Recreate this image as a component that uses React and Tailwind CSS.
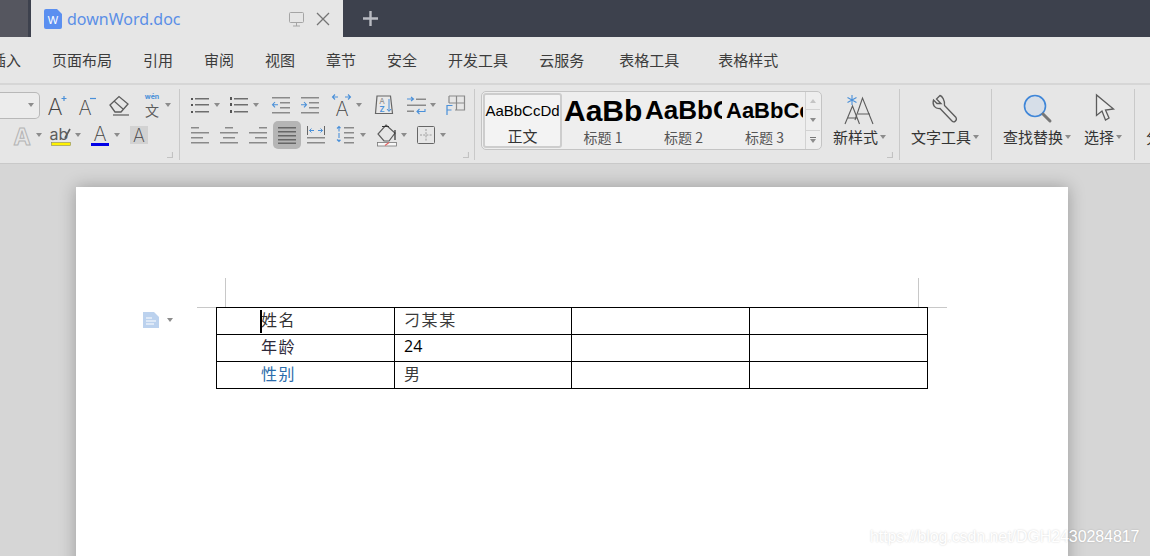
import React from 'react';

const GRAY = '#5c5c5c';
const LINE = '#8a8a8a';
const BLUE = '#4a90d9';
const GLYPH = 'Inter, "Noto Sans", sans-serif';

const Ic = ({ w, h = 24, className = '', children }) => (
  <svg width={w} height={h} viewBox={`0 0 ${w} ${h}`} fill="none" className={`shrink-0 overflow-visible ${className}`}>
    {children}
  </svg>
);

const Caret = ({ className = '' }) => (
  <svg width="6" height="4" viewBox="0 0 6 4" className={`shrink-0 ${className}`}>
    <path d="M0 0H6L3 4z" fill="#8c8c8c" />
  </svg>
);

// horizontal bars used by the paragraph icons: [x, y, width]
const Bars = ({ rows, color = LINE }) => (
  <>
    {rows.map(([x, y, l], i) => (
      <rect key={i} x={x} y={y} width={l} height="1.5" fill={color} />
    ))}
  </>
);

const Letter = ({ x, y, size = 23, weight = 200, fill = '#444', ...rest }) => (
  <text x={x} y={y} fontSize={size} fontWeight={weight} fill={fill} fontFamily={GLYPH} textAnchor="middle" {...rest}>A</text>
);

const Corner = ({ className }) => (
  <svg width="6" height="6" viewBox="0 0 6 6" className={`absolute ${className}`}>
    <path d="M5.5 0V5.5H0" stroke="#c2c2c2" strokeWidth="1.2" fill="none" />
  </svg>
);

const Sep = () => <div className="w-px h-[71px] mt-[4px] bg-[#c9c9c9] shrink-0" />;

const TitleBar = () => (
  <div className="flex h-[37px] bg-[#3d414d] shrink-0">
    <div className="w-[28px] bg-[#55565f]" />
    <div className="ml-[3px] w-[312px] bg-[#e6e6e6] flex items-center pl-[13px]">
      <Ic w={18} h={20}>
        <path d="M2 0H13L18 5V18a2 2 0 0 1-2 2H2a2 2 0 0 1-2-2V2a2 2 0 0 1 2-2z" fill="#5b8ff0" />
        <text x="9" y="15" fontSize="11" fontWeight="400" fill="#fff" fontFamily={GLYPH} textAnchor="middle">W</text>
      </Ic>
      <span className="ml-[5px] text-[16px] leading-none text-[#5b8fe6] font-['Noto_Sans',sans-serif] w-[222px]">downWord.doc</span>
      <Ic w={15} h={16}>
        <rect x="0.5" y="1.5" width="14" height="10" rx="1" stroke="#a5a5a5" />
        <path d="M7.5 11.5V15M4 15H11" stroke="#a5a5a5" />
      </Ic>
      <Ic w={14} h={14} className="ml-[12px]">
        <path d="M1 1L13 13M13 1L1 13" stroke="#757575" strokeWidth="1.3" />
      </Ic>
    </div>
    <Ic w={15} h={15} className="ml-[20px] mt-[11px]">
      <path d="M7.5 0V15M0 7.5H15" stroke="#b9bbc2" strokeWidth="2.4" />
    </Ic>
  </div>
);

const MenuBar = () => (
  <div className="flex items-center h-[46px] bg-[#e6e6e6] border-b-2 border-[#d6d6d6] box-content text-[15px] text-[#3c3c3c] shrink-0 whitespace-nowrap">
    <div className="flex items-center gap-[31px] ml-[-9px]">
      <span>插入</span>
      <span>页面布局</span>
      <span>引用</span>
      <span>审阅</span>
      <span>视图</span>
      <span>章节</span>
      <span>安全</span>
      <span>开发工具</span>
      <span>云服务</span>
      <span className="ml-[4px]">表格工具</span>
      <span className="ml-[8px]">表格样式</span>
    </div>
  </div>
);

const FontGroup = () => (
  <div className="relative w-[179px] shrink-0 pt-[6px]">
    <div className="flex items-center h-[28px]">
      <div className="w-[40px] h-[27px] border border-l-0 border-[#b8b8b8] rounded-r-[5px] bg-[#ececec] flex items-center justify-end pr-[5px]">
        <Caret />
      </div>
      <Ic w={20} className="ml-[7px]">
        <Letter x="8" y="22" />
        <path d="M17 3V8M14.5 5.5H19.5" stroke={BLUE} strokeWidth="1.2" />
      </Ic>
      <Ic w={18} className="ml-[11px]">
        <Letter x="7" y="22" size={20} />
        <path d="M12 5.5H18" stroke={BLUE} strokeWidth="1.2" />
      </Ic>
      <Ic w={20} className="ml-[13px]">
        <path d="M1 12L10 3.5L19 11L12 19H6z" stroke={GRAY} strokeWidth="1.3" />
        <path d="M5 8L14 16" stroke={GRAY} strokeWidth="1.2" />
        <path d="M4 22H20" stroke={GRAY} strokeWidth="1.2" />
      </Ic>
      <Ic w={18} className="ml-[14px]">
        <text x="9" y="6" fontSize="7" fontWeight="700" fill={BLUE} fontFamily={GLYPH} textAnchor="middle">wén</text>
        <text x="9" y="23" fontSize="14" fill={GRAY} fontFamily='"Noto Sans CJK SC", sans-serif' textAnchor="middle">文</text>
      </Ic>
      <Caret className="ml-[4px]" />
    </div>
    <div className="flex items-center h-[30px] mt-[1px]">
      <Ic w={18} className="ml-[13px]">
        <Letter x="9" y="22" size={23} weight={700} fill="none" stroke="#b4b4b4" strokeWidth="1" />
      </Ic>
      <Caret className="ml-[5px]" />
      <Ic w={20} className="ml-[9px]">
        <text x="8" y="17" fontSize="16" fill={GRAY} fontFamily={GLYPH} textAnchor="middle">ab</text>
        <path d="M14 15L19 6" stroke={GRAY} strokeWidth="1.6" />
        <rect x="0.5" y="19.5" width="19" height="3" fill="#fff200" stroke="#8d8d5a" strokeWidth="0.6" />
      </Ic>
      <Caret className="ml-[4px]" />
      <Ic w={18} className="ml-[10px]">
        <Letter x="9" y="18" size={20} />
        <rect x="0" y="20" width="18" height="3" fill="#0000e6" />
      </Ic>
      <Caret className="ml-[5px]" />
      <div className="ml-[10px] w-[18px] h-[18px] bg-[#d2d2d2] flex items-center justify-center">
        <Ic w={18} h={18}>
          <Letter x="9" y="16" size={18} />
        </Ic>
      </div>
    </div>
    <Corner className="right-[6px] bottom-[5px]" />
  </div>
);

const ParagraphGroup = () => (
  <div className="relative w-[294px] shrink-0 pt-[6px]">
    <div className="flex items-center h-[28px]">
      <Ic w={18} h={18} className="ml-[11px]">
        <Bars rows={[[4, 2, 14], [4, 8, 14], [4, 15, 14]]} color="#6e6e6e" />
        <rect x="0" y="2" width="2" height="2" fill="#555" />
        <rect x="0" y="8" width="2" height="2" fill="#555" />
        <rect x="0" y="15" width="2" height="2" fill="#555" />
      </Ic>
      <Caret className="ml-[5px]" />
      <Ic w={18} h={18} className="ml-[10px]">
        <Bars rows={[[4, 2, 14], [4, 8, 14], [4, 15, 14]]} color="#6e6e6e" />
        <rect x="0" y="1" width="2" height="3" fill="#555" />
        <rect x="0" y="7" width="2" height="3" fill="#555" />
        <rect x="0" y="14" width="2" height="3" fill="#555" />
      </Ic>
      <Caret className="ml-[5px]" />
      <Ic w={18} h={18} className="ml-[13px]">
        <Bars rows={[[0, 1, 18], [8, 6, 10], [8, 11, 10], [0, 16, 18]]} />
        <path d="M6 8.7H0.5M3 6L0.5 8.7L3 11.4" stroke={BLUE} strokeWidth="1.1" />
      </Ic>
      <Ic w={18} h={18} className="ml-[11px]">
        <Bars rows={[[0, 1, 18], [8, 6, 10], [8, 11, 10], [0, 16, 18]]} />
        <path d="M0 8.7H5.5M3 6L5.5 8.7L3 11.4" stroke={BLUE} strokeWidth="1.1" />
      </Ic>
      <Ic w={19} className="ml-[13px]">
        <Letter x="10" y="23" size={20} />
        <path d="M0.5 4H6M3 1.5L0.5 4L3 6.5M13 4H18.5M16 1.5L18.5 4L16 6.5" stroke={BLUE} strokeWidth="1.1" />
      </Ic>
      <Caret className="ml-[5px]" />
      <Ic w={18} h={20} className="ml-[13px]">
        <path d="M2 1H15.5L17.5 18.5H0.5z" stroke="#666" strokeWidth="1.2" fill="#e9e9e9" />
        <text x="7" y="8.5" fontSize="8" fill="#8a8a8a" fontFamily={GLYPH} textAnchor="middle">A</text>
        <text x="7" y="17" fontSize="8" fontWeight="600" fill={BLUE} fontFamily={GLYPH} textAnchor="middle">Z</text>
        <path d="M14 4V16M12 14L14 16.5L16 14" stroke={BLUE} strokeWidth="1" />
      </Ic>
      <Ic w={19} h={20} className="ml-[14px]">
        <path d="M0 4H6M4 2L6.5 4L4 6" stroke={BLUE} strokeWidth="1.1" />
        <rect x="9" y="3.5" width="10" height="1.5" fill={LINE} />
        <rect x="0" y="9.5" width="19" height="1.5" fill={LINE} />
        <rect x="0" y="15.5" width="7" height="1.5" fill={LINE} />
        <path d="M18 14V16.5H10M12.5 14L10 16.5L12.5 19" stroke={BLUE} strokeWidth="1.1" />
      </Ic>
      <Caret className="ml-[4px]" />
      <Ic w={19} h={20} className="ml-[10px]">
        <path d="M3 1H18.5V15H9M3 1V8M10.5 1V15M3 8H18.5" stroke="#8a8a8a" strokeWidth="1.2" />
        <path d="M1 20V10.5H6.5M1 15H5.5" stroke={BLUE} strokeWidth="1.2" />
      </Ic>
    </div>
    <div className="flex items-center h-[30px] mt-[1px]">
      <Ic w={18} h={18} className="ml-[11px]">
        <Bars rows={[[0, 1, 8], [0, 6, 18], [0, 11, 12], [0, 16, 18]]} />
      </Ic>
      <Ic w={18} h={18} className="ml-[11px]">
        <Bars rows={[[5, 1, 8], [0, 6, 18], [3, 11, 12], [0, 16, 18]]} />
      </Ic>
      <Ic w={18} h={18} className="ml-[11px]">
        <Bars rows={[[10, 1, 8], [0, 6, 18], [6, 11, 12], [0, 16, 18]]} />
      </Ic>
      <div className="ml-[6px] w-[28px] h-[28px] rounded-[5px] bg-[#b5b5b5] flex items-center justify-center">
        <Ic w={18} h={18}>
          <Bars rows={[[0, 1, 18], [0, 5, 18], [0, 9, 18], [0, 13, 18], [0, 16.5, 18]]} color="#666" />
        </Ic>
      </div>
      <Ic w={18} h={18} className="ml-[6px]">
        <path d="M0.5 0V9M17.5 0V9" stroke="#666" strokeWidth="1" />
        <path d="M7 4.5H2.5M4.5 2.5L2.5 4.5L4.5 6.5M11 4.5H15.5M13.5 2.5L15.5 4.5L13.5 6.5" stroke={BLUE} strokeWidth="1" />
        <Bars rows={[[0, 11, 18], [0, 16, 18]]} />
      </Ic>
      <Ic w={18} h={18} className="ml-[11px]">
        <path d="M3 0.5V15.5M1 2.5L3 0.5L5 2.5M1 13.5L3 15.5L5 13.5" stroke={BLUE} strokeWidth="1.1" strokeDasharray="5 1.5" />
        <Bars rows={[[8, 1, 10], [8, 6, 10], [8, 11, 10], [8, 16, 10]]} />
      </Ic>
      <Caret className="ml-[6px]" />
      <Ic w={20} className="ml-[11px]">
        <path d="M9 2L18 10L12 18H7L1 11z" stroke={GRAY} strokeWidth="1.2" />
        <path d="M5 3.5H12M18 7V17" stroke="#333" strokeWidth="1.2" />
        <rect x="0.5" y="19.5" width="19" height="3.5" fill="#f7f7f7" stroke="#777" strokeWidth="0.8" />
        <path d="M8 22.5L12 19.5" stroke="#e06060" strokeWidth="1.2" />
      </Ic>
      <Caret className="ml-[4px]" />
      <Ic w={18} h={18} className="ml-[10px]">
        <rect x="0.5" y="0.5" width="17" height="17" rx="1" stroke="#666" />
        <path d="M9 3V15M3 9H15" stroke="#8a8a8a" strokeWidth="0.8" strokeDasharray="2 1.2" />
      </Ic>
      <Caret className="ml-[5px]" />
    </div>
    <Corner className="right-[5px] bottom-[5px]" />
  </div>
);

const StyleCell = ({ title, className, sampleClass, sample }) => (
  <div className={`flex flex-col items-center shrink-0 overflow-hidden ${className}`}>
    <div className={`h-[36px] w-full flex items-center overflow-hidden whitespace-nowrap text-black font-['Liberation_Sans',sans-serif] ${sampleClass}`}>
      {sample}
    </div>
    <span className="text-[14px] leading-[18px] text-[#555]">{title}</span>
  </div>
);

const StyleGallery = () => (
  <div className="ml-[6px] mt-[6px] w-[341px] h-[59px] shrink-0 flex border border-[#c4c4c4] rounded-[5px] bg-[#eeeeee] overflow-hidden">
    <div className="ml-[1px] mt-[1px] w-[79px] h-[55px] shrink-0 flex flex-col items-center border-2 border-[#cdcdcd] rounded-[3px] bg-[#f3f3f3]">
      <div className="h-[32px] flex items-center text-[15px] text-black font-['Liberation_Sans',sans-serif] whitespace-nowrap">AaBbCcDd</div>
      <span className="text-[15px] leading-[18px] text-[#333]">正文</span>
    </div>
    <StyleCell title="标题 1" className="ml-[2px] w-[78px]" sampleClass="text-[30px] font-bold justify-start" sample="AaBb" />
    <StyleCell title="标题 2" className="ml-[3px] w-[77px]" sampleClass="text-[26px] font-bold justify-start" sample="AaBbC" />
    <StyleCell title="标题 3" className="ml-[4px] w-[77px]" sampleClass="text-[22px] font-bold justify-start" sample="AaBbCc" />
    <div className="ml-[2px] w-[15px] shrink-0 flex flex-col border-l border-[#d2d2d2]">
      <div className="h-[18px] flex items-center justify-center border-b border-[#d2d2d2]">
        <svg width="6" height="4" viewBox="0 0 6 4"><path d="M0 4H6L3 0z" fill="#c4c4c4" /></svg>
      </div>
      <div className="h-[21px] flex items-center justify-center border-b border-[#d2d2d2]">
        <Caret />
      </div>
      <div className="flex-1 flex flex-col items-center justify-center gap-[1px]">
        <div className="w-[6px] h-px bg-[#777]" />
        <Caret />
      </div>
    </div>
  </div>
);

const TextLabel = ({ children, className = '' }) => (
  <div className={`flex items-center whitespace-nowrap text-[15px] leading-[20px] text-[#333] ${className}`}>
    {children}
    <Caret className="ml-[2px]" />
  </div>
);

const BigTools = () => (
  <>
    <div className="relative w-[77px] shrink-0 pt-[9px] pl-[11px]">
      <Ic w={30} h={30} className="ml-[11px]">
        <path d="M8 1V11M3.5 3.5L12.5 8.5M12.5 3.5L3.5 8.5" stroke={BLUE} strokeWidth="1.1" />
        <path d="M1 30L8.5 12L15.5 30M3.5 24H13" stroke={GRAY} strokeWidth="1.1" />
        <path d="M11 26L18.5 4L29 30M14 20H26" stroke={GRAY} strokeWidth="1.1" />
      </Ic>
      <TextLabel className="mt-[3px]">新样式</TextLabel>
      <Corner className="right-[6px] bottom-[5px]" />
    </div>
    <Sep />
    <div className="w-[91px] shrink-0 pt-[9px] pl-[11px]">
      <Ic w={28} h={30} className="ml-[21px]">
        <path d="M8 1.5L4.5 5L9 9.5L5 9.5L1.5 6C0 11 3 15 8 14.5L20 27C22 29 25.5 26.5 24 23.5L12.5 11.5C13 6 10 2 8 1.5z" stroke={GRAY} strokeWidth="1.3" />
      </Ic>
      <TextLabel className="mt-[3px]">文字工具</TextLabel>
    </div>
    <Sep />
    <div className="w-[142px] shrink-0 pt-[9px] flex pl-[11px]">
      <div className="w-[81px] shrink-0">
        <Ic w={30} h={30} className="ml-[20px]">
          <circle cx="12" cy="12" r="10.5" fill="#d6dee8" stroke="#3f86d8" strokeWidth="1.6" />
          <path d="M20 20L27 27" stroke="#777" strokeWidth="3" strokeLinecap="round" />
        </Ic>
        <TextLabel className="mt-[3px]">查找替换</TextLabel>
      </div>
      <div className="shrink-0">
        <Ic w={20} h={30} className="ml-[11px]">
          <path d="M1.5 1V21.5L7 17L10.5 26L14 24L10.5 16L18.5 15z" fill="#ececec" stroke={GRAY} strokeWidth="1.3" />
        </Ic>
        <TextLabel className="mt-[3px]">选择</TextLabel>
      </div>
    </div>
    <Sep />
    <div className="pl-[11px] pt-[42px] text-[15px] leading-[20px] text-[#333] whitespace-nowrap">分节</div>
  </>
);

const Ribbon = () => (
  <div className="relative flex h-[78px] bg-[#e6e6e6] overflow-hidden shrink-0 shadow-[0_1px_0_#c9c9c9]">
    <FontGroup />
    <Sep />
    <ParagraphGroup />
    <Sep />
    <StyleGallery />
    <BigTools />
  </div>
);

const rows = [
  ['姓名', '刁某某', 'text-[#333]'],
  ['年龄', '24', 'text-[#2e2a3a]'],
  ['性别', '男', 'text-[#2b6cab]'],
];

const DocTable = () => (
  <table className="border-collapse table-fixed w-[712px] shrink-0 text-[16px] tracking-[1.6px]">
    <tbody>
      {rows.map(([name, value, tone], i) => (
        <tr key={name} className="h-[27px]">
          <td className={`relative w-[178px] p-0 pl-[44px] pb-[5px] border border-black leading-none ${tone}`}>
            {i === 0 && <span className="absolute left-[43px] top-[2px] w-[2px] h-[23px] bg-black" />}
            {name}
          </td>
          <td className={`w-[177px] p-0 pl-[9px] pb-[5px] border border-black leading-none ${value === '24' ? "text-black text-[16px] font-medium font-['Open_Sans',sans-serif] tracking-normal" : 'text-[#3a3a3a]'}`}>{value}</td>
          <td className="w-[178px] p-0 border border-black" />
          <td className="w-[178px] p-0 border border-black" />
        </tr>
      ))}
    </tbody>
  </table>
);

export default function App() {
  return (
    <div className="relative flex flex-col w-[1150px] h-[556px] overflow-hidden bg-[#d6d6d6] font-['Noto_Sans_CJK_SC','Noto_Sans',sans-serif]">
      <TitleBar />
      <MenuBar />
      <Ribbon />
      <div className="flex-1 pt-[24px] pl-[76px] min-h-0">
        <div className="relative w-[992px] h-[400px] bg-white shadow-[0_0_16px_rgba(0,0,0,0.28)] pt-[91px]">
          <div className="ml-[149px] w-[694px] h-[29px] border-x border-[#c8c8c8]" />
          <div className="flex items-start ml-[121px]">
            <div className="w-[19px] h-px bg-[#c8c8c8]" />
            <DocTable />
            <div className="w-[19px] h-px bg-[#c8c8c8]" />
          </div>
          <div className="absolute left-[67px] top-[125px] flex items-center">
            <Ic w={16} h={16}>
              <path d="M0 0H11L16 5V16H0z" fill="#bcd2ee" />
              <path d="M3 6H9M3 9H13M3 12H11" stroke="#fff" strokeWidth="1.1" />
            </Ic>
            <Caret className="ml-[8px]" />
          </div>
        </div>
      </div>
      <div className="absolute left-[870px] top-[528px] text-[16px] tracking-[-0.08px] leading-[18px] font-['Liberation_Sans',sans-serif] text-white [text-shadow:0_0_2px_rgba(0,0,0,0.2)]">
        https://blog.csdn.net/DGH2430284817
      </div>
    </div>
  );
}
